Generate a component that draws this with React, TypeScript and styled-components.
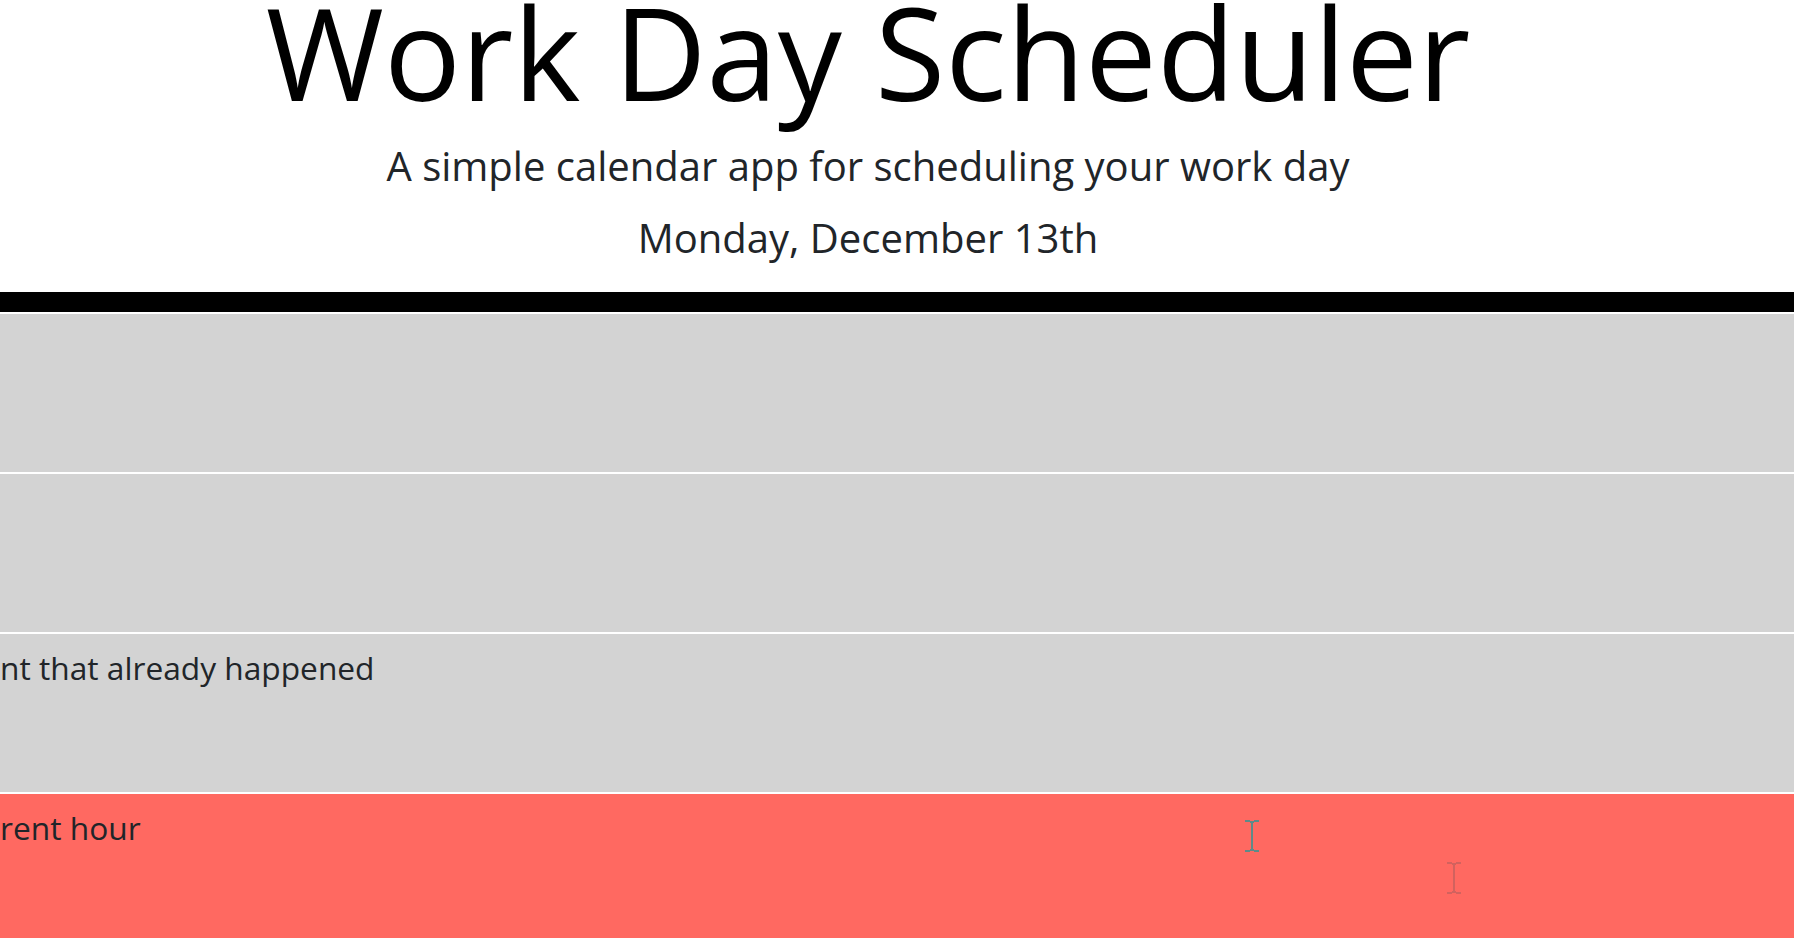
import React from "react";
import styled, { createGlobalStyle } from "styled-components";

const GlobalStyle = createGlobalStyle`
  html, body {
    margin: 0;
    padding: 0;
    background: #ffffff;
    overflow: hidden;
  }
  body {
    font-family: "Open Sans", "Liberation Sans", sans-serif;
    color: #212529;
  }
  * { box-sizing: border-box; }
`;

const Page = styled.div`
  width: 1794px;
  height: 938px;
  overflow: hidden;
  display: flex;
  flex-direction: column;
`;

const Jumbotron = styled.header`
  display: flex;
  flex-direction: column;
  align-items: center;
  text-align: center;
  padding: 0 58px 34px 0;
  border-bottom: 20px solid #000000;
`;

const Title = styled.h1`
  margin: 0 0 42px;
  font-family: "Open Sans", "Liberation Sans", sans-serif;
  font-weight: 400;
  font-size: 128px;
  line-height: 104px;
  color: #000000;
  white-space: nowrap;
`;

const Lead = styled.p<{ $gap: number }>`
  margin: 0 0 ${(p) => p.$gap}px;
  font-family: "Open Sans", "Liberation Sans", sans-serif;
  font-weight: 400;
  font-size: 40px;
  line-height: 40px;
  color: #212529;
  white-space: nowrap;
`;

const Rows = styled.main`
  display: flex;
  flex-direction: column;
`;

const TimeRow = styled.div<{ $state: "past" | "present" | "future" }>`
  position: relative;
  flex: 0 0 160px;
  border-top: 2px solid #ffffff;
  background: ${(p) =>
    p.$state === "past" ? "#d3d3d3" : p.$state === "present" ? "#ff6961" : "#77dd77"};
  padding: 18px 0 0 0;
`;

const Description = styled.div`
  font-family: "Open Sans", "Liberation Sans", sans-serif;
  font-size: 31.7px;
  line-height: 32px;
  color: #212529;
  white-space: pre;
`;

const Cursor = styled.svg<{ $faint?: boolean }>`
  position: absolute;
  width: 14px;
  height: 32px;
  color: ${(p) => (p.$faint ? "#d2625e" : "#5f8a88")};
`;

const IBeam: React.FC<{ faint?: boolean; left: number; top: number }> = ({ faint, left, top }) => (
  <Cursor $faint={faint} viewBox="0 0 14 32" style={{ left, top }}>
    <rect x="0" y="0" width="5" height="2" fill="currentColor" />
    <rect x="9" y="0" width="5" height="2" fill="currentColor" />
    <rect x="5" y="1" width="4" height="2" fill="currentColor" />
    <rect x="6" y="2" width="2" height="28" fill="currentColor" />
    <rect x="5" y="29" width="4" height="2" fill="currentColor" />
    <rect x="0" y="30" width="5" height="2" fill="currentColor" />
    <rect x="9" y="30" width="5" height="2" fill="currentColor" />
  </Cursor>
);

const rows: { state: "past" | "present" | "future"; text: string }[] = [
  { state: "past", text: "" },
  { state: "past", text: "" },
  { state: "past", text: "nt that already happened" },
  { state: "present", text: "rent hour" },
];

export default function App() {
  return (
    <>
      <GlobalStyle />
      <Page>
        <Jumbotron>
          <Title>Work Day Scheduler</Title>
          <Lead $gap={32}>A simple calendar app for scheduling your work day</Lead>
          <Lead $gap={0}>Monday, December 13th</Lead>
        </Jumbotron>
        <Rows>
          {rows.map((r, i) => (
            <TimeRow key={i} $state={r.state}>
              <Description>{r.text}</Description>
              {r.state === "present" && (
                <>
                  <IBeam left={1245} top={26} />
                  <IBeam faint left={1447} top={68} />
                </>
              )}
            </TimeRow>
          ))}
        </Rows>
      </Page>
    </>
  );
}
